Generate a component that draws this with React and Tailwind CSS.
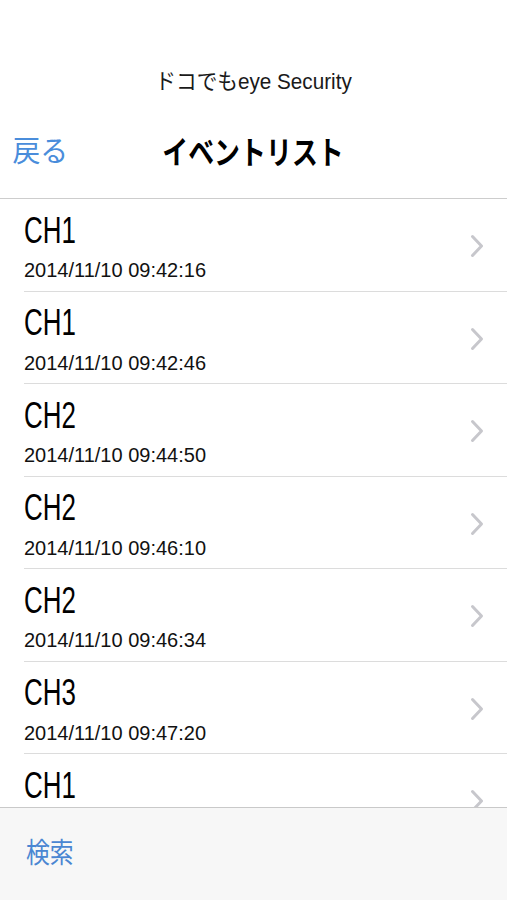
import React from 'react';

const events = [
    { ch: 'CH1', time: '2014/11/10 09:42:16' },
    { ch: 'CH1', time: '2014/11/10 09:42:46' },
    { ch: 'CH2', time: '2014/11/10 09:44:50' },
    { ch: 'CH2', time: '2014/11/10 09:46:10' },
    { ch: 'CH2', time: '2014/11/10 09:46:34' },
    { ch: 'CH3', time: '2014/11/10 09:47:20' },
    { ch: 'CH1', time: '2014/11/10 09:47:58' },
];

const Chevron = () => (
    <svg width="14" height="24" viewBox="0 0 14 24" className="shrink-0 mt-[3px]">
        <polyline points="2.5,2.5 11.5,12 2.5,21.5" fill="none" stroke="#c7c7cc" strokeWidth="3" strokeLinecap="round" strokeLinejoin="round" />
    </svg>
);

const EventRow = ({ ch, time }) => (
    <div className="h-[92.5px] shrink-0 pl-6">
        <div className="h-full flex items-center justify-between pr-[23px] border-b border-[#dcdcdc]">
            <div className="self-start pt-[13.5px]">
                <p className="text-[36px] leading-[36px] text-black scale-x-[0.72] origin-left">{ch}</p>
                <p className="text-[20px] leading-[20px] mt-[11.5px] text-[#111] whitespace-nowrap">{time}</p>
            </div>
            <Chevron />
        </div>
    </div>
);

const App = () => {
    return (
        <div className="w-[507px] h-[900px] flex flex-col bg-white overflow-hidden font-['Liberation_Sans','Noto_Sans_CJK_JP',sans-serif]">
            {/* Header */}
            <div className="h-[199px] shrink-0 flex flex-col border-b border-[#cdcdcd]">
                <div className="mt-[61px] h-[40px] flex items-center justify-center">
                    <span className="text-[22px] text-[#1a1a1a] scale-x-[0.94] whitespace-nowrap">ドコでもeye Security</span>
                </div>
                <div className="mt-[27px] h-[50px] grid grid-cols-[1fr_auto_1fr] items-center">
                    <span className="pl-[13px] text-[29px] text-[#4a8ddb] scale-x-[0.96] origin-left whitespace-nowrap">戻る</span>
                    <span className="text-[32px] font-bold text-black scale-x-[0.81] whitespace-nowrap">イベントリスト</span>
                    <span />
                </div>
            </div>

            {/* Event list */}
            <div className="flex-1 overflow-hidden flex flex-col">
                {events.map((e, i) => (
                    <EventRow key={i} ch={e.ch} time={e.time} />
                ))}
            </div>

            {/* Toolbar */}
            <div className="h-[93px] shrink-0 bg-[#f7f7f7] border-t border-[#c9c9c9] flex items-center pl-[26px]">
                <span className="text-[28px] text-[#4a86d2] scale-x-[0.85] origin-left whitespace-nowrap">検索</span>
            </div>
        </div>
    );
};

export default App;
